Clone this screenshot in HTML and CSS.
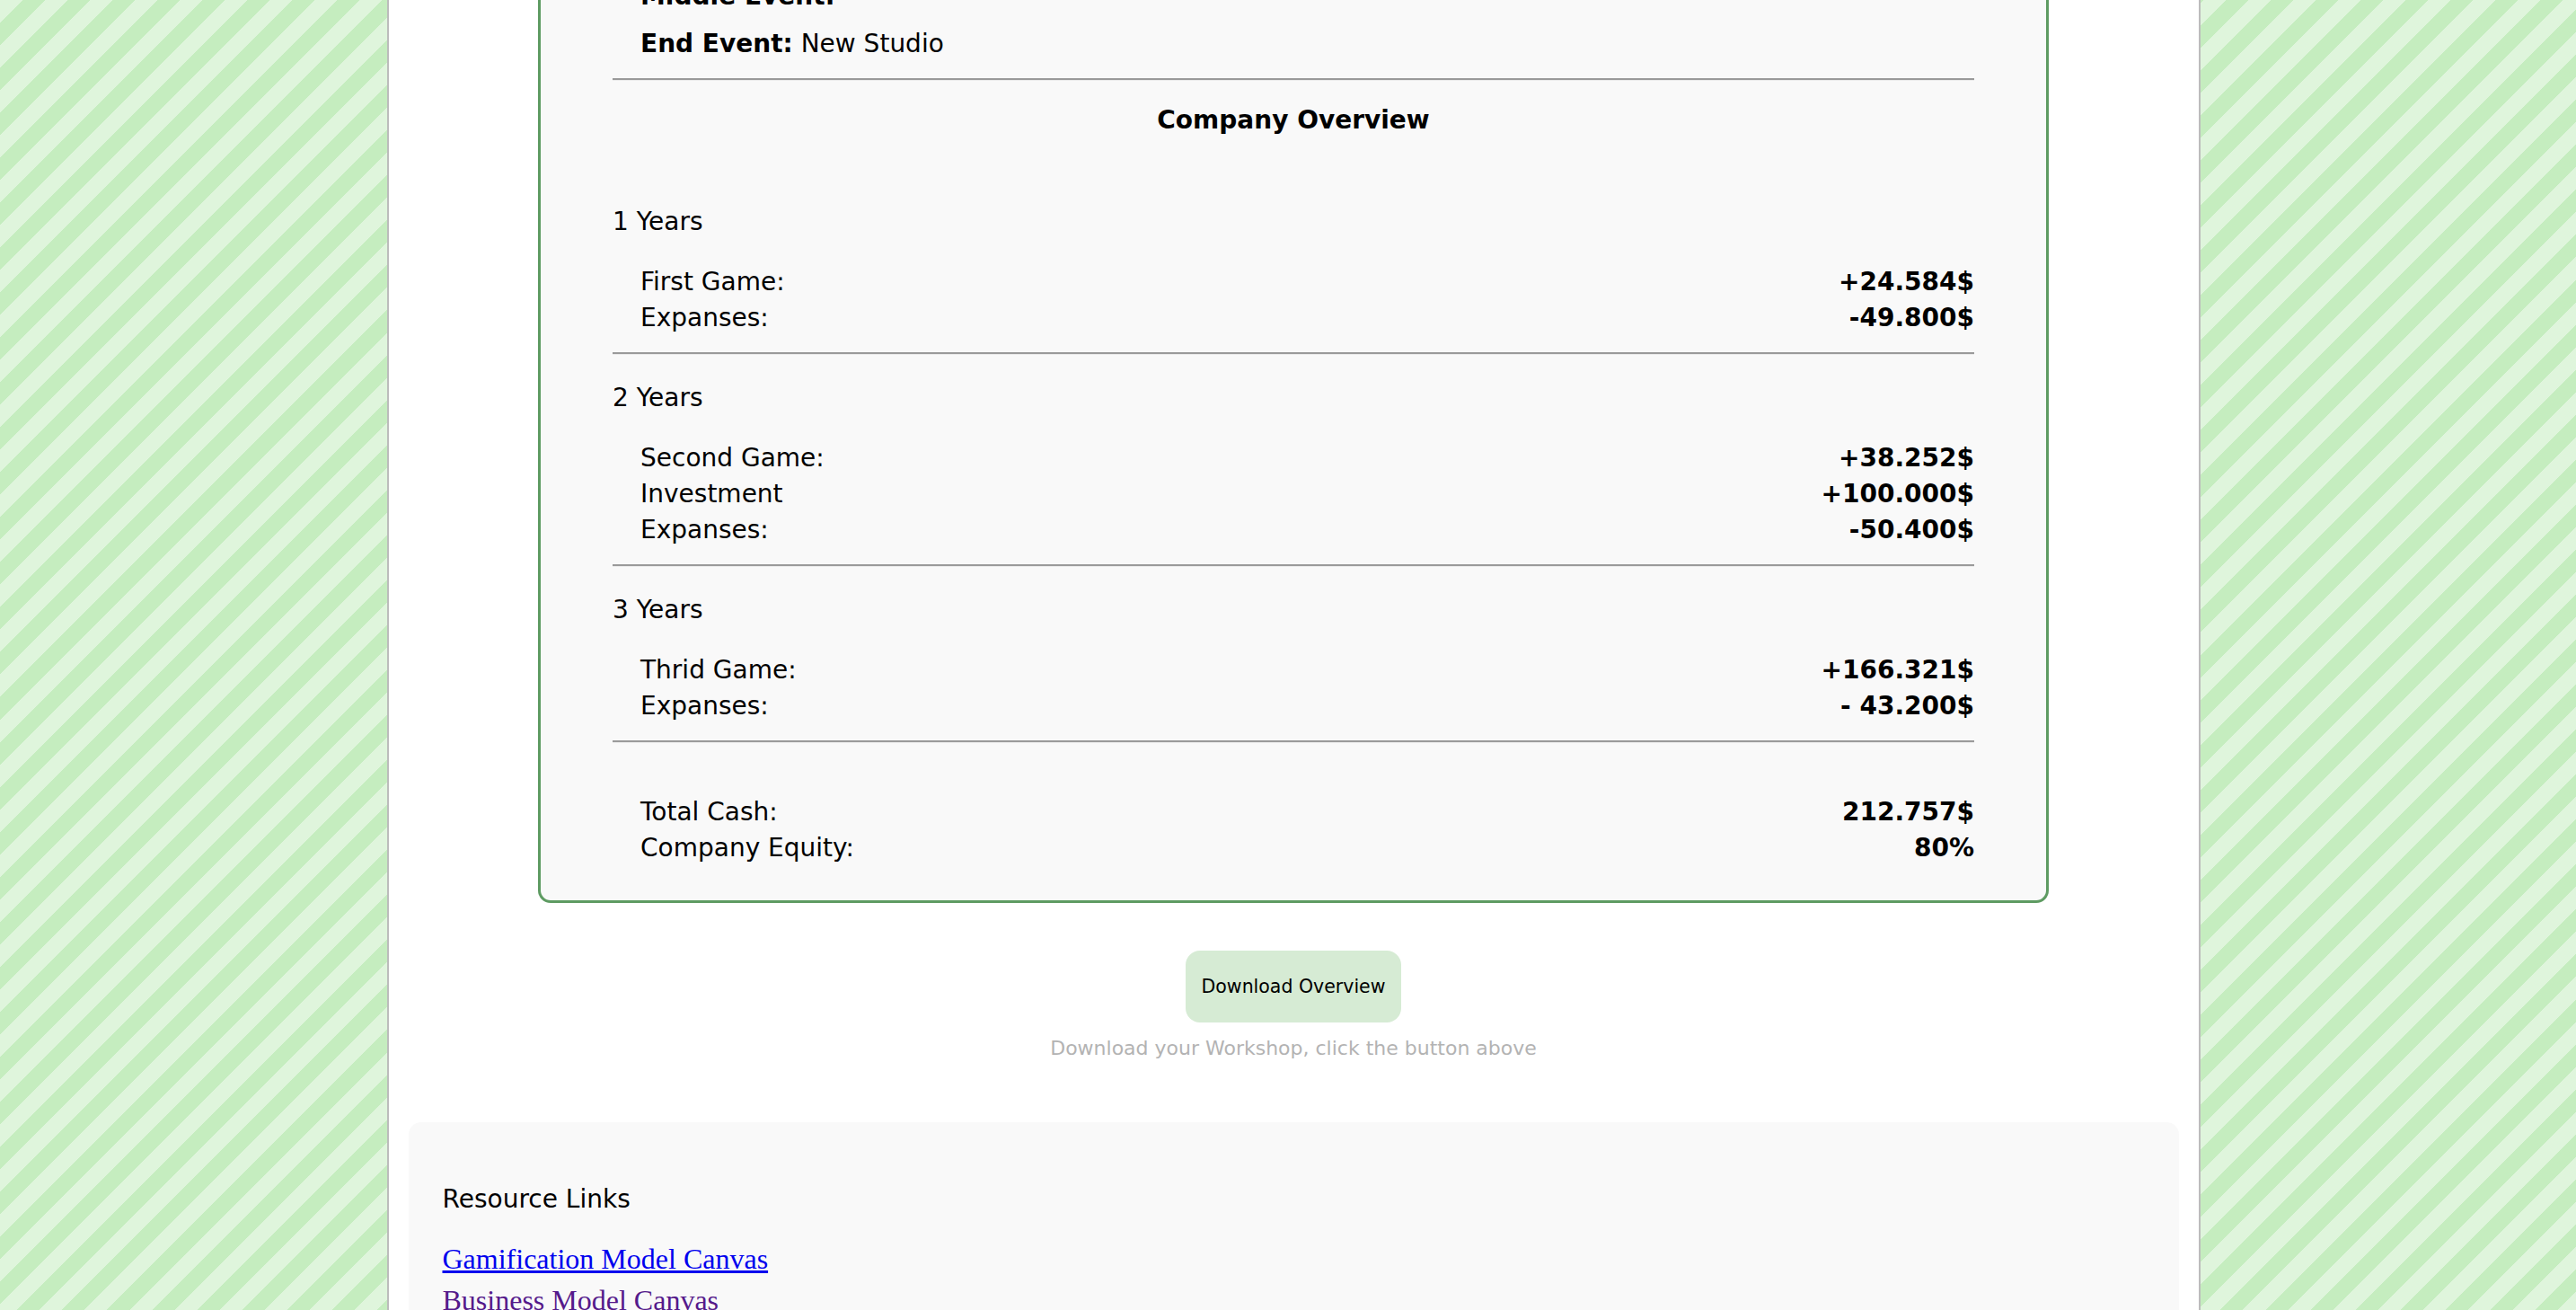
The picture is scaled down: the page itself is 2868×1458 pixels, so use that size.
FILE: index.html
```html
<!DOCTYPE html>
<html lang="en">
<head>
<meta charset="utf-8">
<title>Company Overview</title>
<link rel="stylesheet" href="styles.css">
</head>
<body>
<div class="page">
  <section class="card">
    <p class="event"><b>Middle Event:</b></p>
    <p class="event"><b>End Event:</b> New Studio</p>
    <hr class="sep">
    <h2 class="title">Company Overview</h2>

    <p class="year">1 Years</p>
    <div class="row"><span>First Game:</span><span class="v">+24.584$</span></div>
    <div class="row"><span>Expanses:</span><span class="v">-49.800$</span></div>
    <hr class="sep">

    <p class="year">2 Years</p>
    <div class="row"><span>Second Game:</span><span class="v">+38.252$</span></div>
    <div class="row"><span>Investment</span><span class="v">+100.000$</span></div>
    <div class="row"><span>Expanses:</span><span class="v">-50.400$</span></div>
    <hr class="sep">

    <p class="year">3 Years</p>
    <div class="row"><span>Thrid Game:</span><span class="v">+166.321$</span></div>
    <div class="row"><span>Expanses:</span><span class="v">- 43.200$</span></div>
    <hr class="sep">

    <div class="totals">
      <div class="row"><span>Total Cash:</span><span class="v">212.757$</span></div>
      <div class="row"><span>Company Equity:</span><span class="v">80%</span></div>
    </div>
  </section>

  <div class="download">
    <button class="btn" type="button">Download Overview</button>
    <p class="hint">Download your Workshop, click the button above</p>
  </div>

  <section class="resources">
    <h3 class="res-title">Resource Links</h3>
    <div class="links">
      <a class="link" href="#gamification">Gamification Model Canvas</a>
      <a class="link visited" href="#business">Business Model Canvas</a>
    </div>
  </section>
</div>
</body>
</html>
```

FILE: styles.css
```css
html, body {
  margin: 0;
  padding: 0;
}

body {
  padding-left: 12px;
  background-color: #dff5dc;
  background-image: repeating-linear-gradient(135deg, #dff5dc 0 17.7px, #c5edbf 17.7px 35.4px);
  font-family: "DejaVu Sans", Verdana, sans-serif;
  color: #000;
  overflow: hidden;
}

.page {
  width: 2019px;
  box-sizing: border-box;
  margin: 0 auto;
  background: #fff;
  border-left: 2px solid #bcbcbc;
  border-right: 2px solid #bcbcbc;
  min-height: 1600px;
  padding-bottom: 40px;
}

.card {
  width: 1682px;
  box-sizing: border-box;
  margin: -24px auto 0;
  background: #f9f9f9;
  border: 3px solid #5e9b62;
  border-top: none;
  border-radius: 0 0 14px 14px;
  padding: 0 80px 38px;
  font-size: 28px;
}

.event {
  margin: 0 0 13px;
  line-height: 40px;
  padding-left: 31px;
}

.event + .event {
  margin-bottom: 0;
}

.event b {
  font-weight: bold;
}

.sep {
  height: 0;
  margin: 18px 0 28px;
  border: none;
  border-top: 2px solid #9a9a9a;
  border-bottom: 1px solid #ececec;
}

.title {
  margin: -4px 0 73px;
  font-size: 28px;
  line-height: 40px;
  font-weight: bold;
  text-align: center;
}

.year {
  margin: 0 0 27px;
  line-height: 40px;
}

.row {
  display: flex;
  justify-content: space-between;
  padding-left: 31px;
  line-height: 40px;
}

.row .v {
  font-weight: bold;
}

.totals {
  margin-top: 57px;
}

.download {
  display: flex;
  flex-direction: column;
  align-items: center;
  margin-top: 53px;
}

.btn {
  width: 240px;
  height: 80px;
  border: none;
  border-radius: 16px;
  background: #d6ebd4;
  color: #000;
  font-family: "DejaVu Sans", Verdana, sans-serif;
  font-size: 20.5px;
  padding: 0;
  cursor: pointer;
}

.hint {
  margin: 14px 0 0;
  font-size: 22px;
  line-height: 30px;
  color: #b3b3b3;
}

.resources {
  margin: 67px 22px 0;
  background: #f9f9f9;
  border-radius: 14px;
  padding: 69px 38px 60px;
}

.res-title {
  margin: 0;
  font-size: 28px;
  font-weight: normal;
  line-height: 34px;
}

.links {
  margin-top: 26px;
  font-family: "Liberation Serif", "Times New Roman", serif;
  font-size: 32px;
  line-height: 46px;
}

.link {
  display: block;
  width: max-content;
  color: #0000ee;
  text-decoration: underline;
}

.link.visited {
  color: #551a8b;
}
```
